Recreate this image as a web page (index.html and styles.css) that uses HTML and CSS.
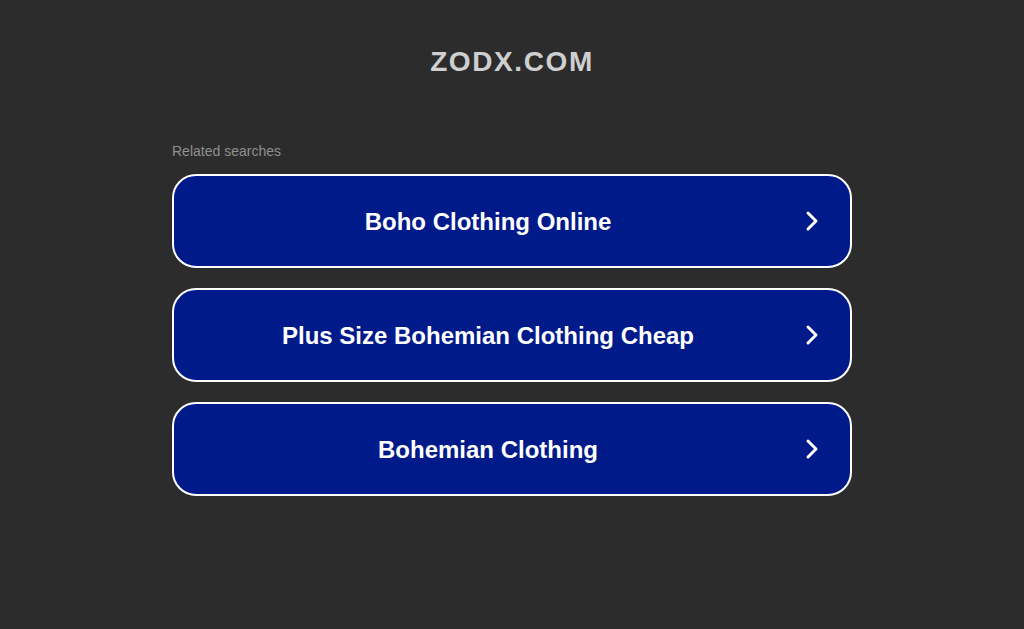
FILE: index.html
```html
<!DOCTYPE html>
<html>
<head>
<meta charset="utf-8">
<link rel="stylesheet" href="styles.css">
</head>
<body>
<header class="header"><h1 class="domain">ZODX.COM</h1></header>
<main class="content">
  <p class="label">Related searches</p>
  <div class="list">
    <a class="item" href="#"><span class="item-text">Boho Clothing Online</span><svg class="chev" viewBox="0 0 14 22" width="14" height="22"><path d="M3 3 L11 11 L3 19" fill="none" stroke="#fff" stroke-width="3" stroke-linecap="round" stroke-linejoin="round"/></svg></a>
    <a class="item" href="#"><span class="item-text">Plus Size Bohemian Clothing Cheap</span><svg class="chev" viewBox="0 0 14 22" width="14" height="22"><path d="M3 3 L11 11 L3 19" fill="none" stroke="#fff" stroke-width="3" stroke-linecap="round" stroke-linejoin="round"/></svg></a>
    <a class="item" href="#"><span class="item-text">Bohemian Clothing</span><svg class="chev" viewBox="0 0 14 22" width="14" height="22"><path d="M3 3 L11 11 L3 19" fill="none" stroke="#fff" stroke-width="3" stroke-linecap="round" stroke-linejoin="round"/></svg></a>
  </div>
</main>
</body>
</html>
```
FILE: styles.css
```css
html, body {
  margin: 0;
  padding: 0;
  background: #2c2c2c;
  font-family: "Liberation Sans", Arial, sans-serif;
}
.header {
  padding-top: 45px;
  text-align: center;
}
.domain {
  margin: 0;
  font-size: 28px;
  line-height: 34px;
  font-weight: bold;
  color: #cfcfcf;
  letter-spacing: 1.6px;
}
.content {
  width: 680px;
  margin: 0 auto;
  padding-top: 63px;
}
.label {
  margin: 0 0 14px 0;
  font-size: 14px;
  line-height: 18px;
  color: #8f8f8f;
}
.list {
  display: flex;
  flex-direction: column;
  gap: 20px;
}
.item {
  display: flex;
  align-items: center;
  height: 94px;
  box-sizing: border-box;
  border: 2px solid #ffffff;
  border-radius: 24px;
  background: #011a8a;
  padding-right: 31px;
  text-decoration: none;
}
.item-text {
  flex: 1;
  padding: 2px 3px 0 0;
  text-align: center;
  color: #ffffff;
  font-size: 24px;
  font-weight: bold;
}
.chev {
  display: block;
  flex: none;
}
```
